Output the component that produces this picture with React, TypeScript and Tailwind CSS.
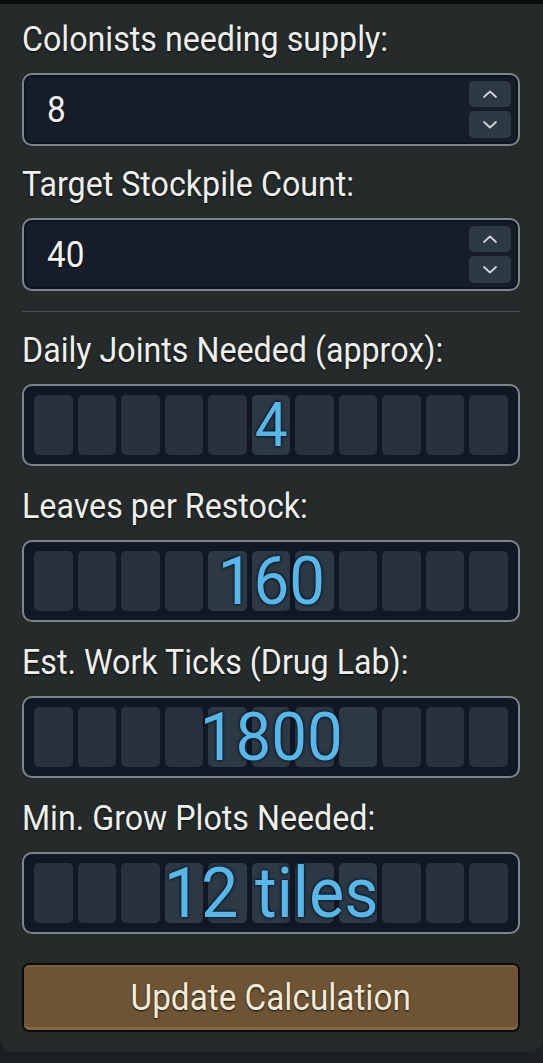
import React from "react";

const font = { fontFamily: "Roboto, 'Noto Sans', sans-serif" };

type Output = { label: string; value: string; size: string; lit: number[] };

const outputs: Output[] = [
  { label: "Daily Joints Needed (approx):", value: "4", size: "text-[62px]", lit: [5] },
  { label: "Leaves per Restock:", value: "160", size: "text-[67px]", lit: [4, 5, 6] },
  { label: "Est. Work Ticks (Drug Lab):", value: "1800", size: "text-[67px]", lit: [4, 5, 6, 7] },
  { label: "Min. Grow Plots Needed:", value: "12 tiles", size: "text-[70px]", lit: [3, 4, 5, 6, 7] },
];

function Label({ children }: { children: React.ReactNode }) {
  return (
    <div className="h-9 leading-9 text-[35px] text-[#efefeb] whitespace-nowrap [text-shadow:0_1px_2px_rgba(0,0,0,0.85)]">
      <span className="inline-block origin-left scale-x-[0.92]">{children}</span>
    </div>
  );
}

function Chevron({ up }: { up?: boolean }) {
  return (
    <svg width="16" height="10" viewBox="0 0 16 10" fill="none">
      <path
        d={up ? "M2 8L8 2.5L14 8" : "M2 2L8 7.5L14 2"}
        stroke="#d3d7da"
        strokeWidth="1.7"
        strokeLinecap="round"
        strokeLinejoin="round"
      />
    </svg>
  );
}

function NumberField({ label, value }: { label: string; value: string }) {
  return (
    <div className="flex flex-col">
      <Label>{label}</Label>
      <div className="mt-[15px] h-[73px] flex items-center justify-between rounded-[10px] border-2 border-[#7e858a] bg-[#161d29] pl-[23px] pr-[7px] shadow-[inset_0_0_0_2px_#0e141d]">
        <span className="inline-block origin-left scale-x-90 text-[37px] leading-none text-[#f2f2ee] [text-shadow:0_1px_2px_rgba(0,0,0,0.8)]">
          {value}
        </span>
        <div className="flex flex-col gap-1">
          <button className="w-[42px] h-[26px] rounded-[5px] bg-[#2d3945] flex items-center justify-center">
            <Chevron up />
          </button>
          <button className="w-[42px] h-[27px] rounded-[5px] bg-[#2d3945] flex items-center justify-center">
            <Chevron />
          </button>
        </div>
      </div>
    </div>
  );
}

function ResultField({ label, value, size, lit }: Output) {
  return (
    <div className="flex flex-col mt-[23px] first:mt-0">
      <Label>{label}</Label>
      <div className="mt-[15px] relative h-[82px] rounded-[10px] border-2 border-[#7e858a] bg-[#111823] px-[10px] py-[9px] flex gap-[5px]">
        {Array.from({ length: 11 }).map((_, i) => (
          <div
            key={i}
            className={
              "flex-1 h-[60px] rounded-[5px] " +
              (lit.includes(i) ? "bg-[#2e3946]" : "bg-[#28313d]")
            }
          />
        ))}
        <div className="absolute inset-0 flex items-center justify-center">
          <span
            className={
              "inline-block scale-x-95 leading-none text-[#55b7ea] [text-shadow:0_0_2px_#06101a,0_0_4px_#06101a] " +
              size
            }
          >
            {value}
          </span>
        </div>
      </div>
    </div>
  );
}

export default function App() {
  return (
    <div className="min-h-screen bg-[#1b2022]" style={font}>
      <div className="w-full border-t-4 border-[#0b0e0f] bg-[#252b2b] rounded-b-[14px] pl-[22px] pr-[23px] pt-[18px] pb-[20px]">
        <NumberField label="Colonists needing supply:" value="8" />
        <div className="mt-[21px]">
          <NumberField label="Target Stockpile Count:" value="40" />
        </div>

        <div className="mt-[20px] h-px bg-[#4b5356]" />

        <div className="mt-[21px] flex flex-col">
          {outputs.map((o) => (
            <ResultField key={o.label} {...o} />
          ))}
        </div>

        <button className="mt-[29px] w-full h-[69px] rounded-[7px] border-2 border-[#0d0b08] bg-[#6d5434] shadow-[inset_0_-3px_0_#87693f,inset_0_2px_0_#7b5f3a] flex items-center justify-center">
          <span className="inline-block scale-x-90 text-[37px] leading-none text-[#f3ead9] [text-shadow:0_1px_2px_rgba(0,0,0,0.85)]">
            Update Calculation
          </span>
        </button>
      </div>
    </div>
  );
}
